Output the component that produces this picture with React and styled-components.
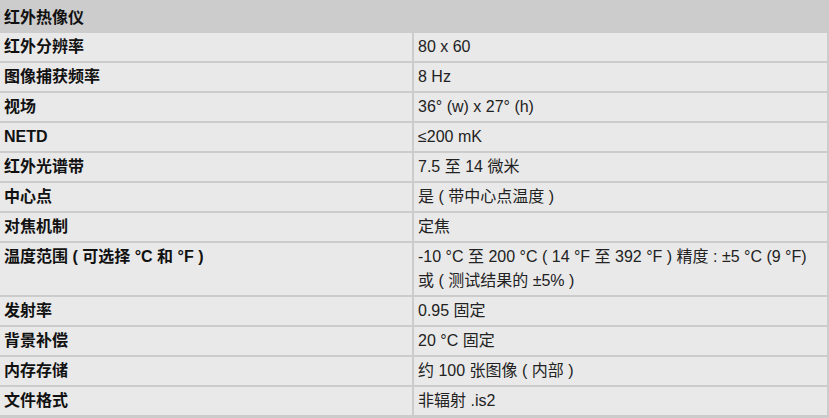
import React from "react";
import styled, { createGlobalStyle } from "styled-components";

const Global = createGlobalStyle`
  html, body { margin: 0; padding: 0; background: #d9d9d9; }
  body { font-family: "Liberation Sans", Arial, "Noto Sans CJK SC", sans-serif; }
`;

const Table = styled.div`
  display: grid;
  grid-template-columns: 412px 1fr;
  column-gap: 2px;
  row-gap: 2px;
  padding: 0 2px 3px 0;
  background: #cccccc;
  width: 829px;
  box-sizing: border-box;
`;

const Header = styled.div`
  grid-column: 1 / span 2;
  height: 31px;
  background: #cccccc;
  padding: 0 4px;
  display: flex;
  align-items: center;
  font-weight: bold;
  font-size: 16px;
  color: #111;
`;

const Cell = styled.div`
  background: #e9e9e9;
  padding: 2px 4px;
  line-height: 24px;
  font-size: 16px;
  color: ${(p) => (p.$label ? "#111" : "#222")};
  font-weight: ${(p) => (p.$label ? "bold" : "normal")};
`;

const rows = [
  ["红外分辨率", "80 x 60"],
  ["图像捕获频率", "8 Hz"],
  ["视场", "36° (w) x 27° (h)"],
  ["NETD", "≤200 mK"],
  ["红外光谱带", "7.5 至 14 微米"],
  ["中心点", "是 ( 带中心点温度 )"],
  ["对焦机制", "定焦"],
  [
    "温度范围 ( 可选择 °C 和 °F )",
    "-10 °C 至 200 °C ( 14 °F 至 392 °F ) 精度 : ±5 °C (9 °F) 或 ( 测试结果的 ±5% )",
  ],
  ["发射率", "0.95 固定"],
  ["背景补偿", "20 °C 固定"],
  ["内存存储", "约 100 张图像 ( 内部 )"],
  ["文件格式", "非辐射 .is2"],
];

export default function App() {
  return (
    <>
      <Global />
      <Table>
        <Header>红外热像仪</Header>
        {rows.map(([k, v]) => (
          <React.Fragment key={k}>
            <Cell $label>{k}</Cell>
            <Cell>{v}</Cell>
          </React.Fragment>
        ))}
      </Table>
    </>
  );
}
